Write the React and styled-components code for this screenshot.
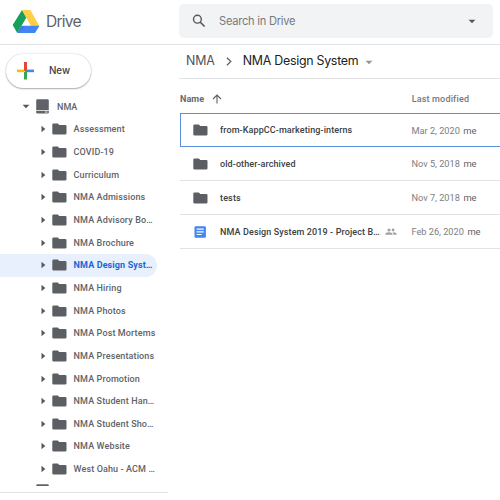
import React from "react";
import styled, { createGlobalStyle } from "styled-components";

const Global = createGlobalStyle`
  * { box-sizing: border-box; }
  body { margin: 0; background: #fff; font-family: Roboto, sans-serif; }
`;

const Page = styled.div`
  width: 500px;
  height: 500px;
  overflow: hidden;
  background: #fff;
  display: flex;
  flex-direction: column;
  color: #5f6368;
`;

const Header = styled.header`
  height: 45px;
  flex: none;
  display: flex;
  border-bottom: 1px solid #e2e3e4;
`;

const Brand = styled.div`
  width: 179px;
  height: 42px;
  padding-left: 12px;
  display: flex;
  align-items: center;
  gap: 6px;
`;

const BrandName = styled.span`
  margin-top: 1px;
  font: 400 15.6px/20px Inter, sans-serif;
  letter-spacing: -0.78px;
  color: #5f6368;
`;

const SearchBar = styled.div`
  width: 313.5px;
  height: 34px;
  margin-top: 4px;
  padding: 0 17px 0 13px;
  border-radius: 5px;
  background: #f1f3f4;
  display: flex;
  align-items: center;
`;

const SearchText = styled.span`
  flex: 1;
  margin-left: 13px;
  font: 400 11.1px/16px Inter, sans-serif;
  letter-spacing: -0.24px;
  color: #77797c;
`;

const Body = styled.div`
  flex: 1;
  min-height: 0;
  display: flex;
`;

const Sidebar = styled.aside`
  width: 168px;
  height: 448px;
  margin-right: 11px;
  flex: none;
  display: flex;
  flex-direction: column;
  border-bottom: 1px solid #e2e3e4;
`;

const NewButton = styled.button`
  width: 85px;
  height: 34px;
  flex: none;
  margin: 9px 0 0 5.5px;
  padding: 0 0 0 11.5px;
  border: 0;
  border-radius: 17px;
  background: #fff;
  box-shadow: 0 1px 1.5px rgba(60, 64, 67, 0.38), 0 0 1.5px rgba(60, 64, 67, 0.3);
  display: flex;
  align-items: center;
  gap: 15px;
  font: 500 9.8px/14px Inter, sans-serif;
  letter-spacing: -0.05px;
  color: #3c4043;
`;

const Tree = styled.div`
  height: 390.5px;
  margin-top: 7.5px;
  overflow: hidden;
`;

const TreeRow = styled.div`
  width: 156.5px;
  height: 22.65px;
  padding-left: ${(p) => (p.$root ? 22 : 40)}px;
  display: flex;
  align-items: center;
  border-radius: 0 12px 12px 0;
  background: ${(p) => (p.$selected ? "#e8f0fe" : "transparent")};
  color: ${(p) => (p.$selected ? "#1967d2" : "#5f6368")};
`;

const TreeLabel = styled.span`
  margin-left: ${(p) => (p.$root ? 8 : 6.6)}px;
  font-size: 9px;
  line-height: 14px;
  font-weight: ${(p) => (p.$selected ? 700 : 500)};
  letter-spacing: ${(p) => p.$track ?? 0.12}px;
  white-space: nowrap;
`;

const RootIcon = styled.span`
  display: flex;
  margin-left: ${(p) => (p.$last ? 14 : 6)}px;
`;

const FolderSlot = styled.span`
  display: flex;
  margin-left: 6px;
`;

const Main = styled.main`
  width: 321px;
  flex: none;
`;

const Breadcrumbs = styled.nav`
  height: 34px;
  padding-left: 7px;
  border-bottom: 1px solid #e2e3e4;
  display: flex;
  align-items: center;
`;

const Crumb = styled.span`
  margin-top: -1px;
  font: 400 12.4px/18px Inter, sans-serif;
  letter-spacing: ${(p) => p.$track}px;
  white-space: nowrap;
  color: ${(p) => (p.$current ? "#202124" : "#505357")};
`;

const CrumbSeparator = styled.span`
  display: flex;
  margin: 0 11px 0 11px;
`;

const CrumbMenu = styled.span`
  display: flex;
  margin: 1px 0 0 7px;
`;

const Columns = styled.div`
  height: 34px;
  padding: 5px 0 0 1px;
  display: flex;
  align-items: center;
  font-size: 9px;
  color: #68696b;
`;

const NameColumn = styled.div`
  width: 231.7px;
  display: flex;
  align-items: center;
  gap: 7.5px;
  font-weight: 700;
  letter-spacing: 0.1px;
`;

const ModifiedColumn = styled.div`
  font-weight: 500;
  letter-spacing: 0.17px;
  color: #777;
`;

const FileRow = styled.div`
  height: 34px;
  margin-left: 1px;
  padding-left: ${(p) => (p.$selected ? 12 : 13)}px;
  border-style: solid;
  border-color: ${(p) => (p.$selected ? "#5b8fe0" : "#e3e3e3")};
  border-width: ${(p) => (p.$selected ? "1px 0 1px 1px" : "0 0 1px 0")};
  display: flex;
  align-items: center;
`;

const FileIcon = styled.div`
  width: 27px;
  display: flex;
  align-items: center;
`;

const FileName = styled.div`
  width: 191.5px;
  display: flex;
  align-items: center;
  justify-content: space-between;
  padding-right: 14.5px;
  white-space: nowrap;
  font-size: 9px;
  font-weight: 500;
  letter-spacing: ${(p) => p.$track}px;
  color: #3c4043;
`;

const Modified = styled.div`
  display: flex;
  gap: 3.5px;
  font-size: 9.2px;
  letter-spacing: 0;
  color: #7c7d7f;
`;

const Owner = styled.span`
  font-size: 9.4px;
  color: #5f6063;
`;

const Logo = () => (
  <svg width="28" height="25" viewBox="0 0 28 25">
    <path d="M10 1 L.7 16 L5.2 24 L14.4 8.5Z" fill="#16a05a" />
    <path d="M10 1H18.4L27.4 17H18.9Z" fill="#ffcf48" />
    <path d="M9.4 16.7H27.5L23 24H5.2Z" fill="#4286f5" />
    <path d="M5.2 24L9.4 16.7L13 19Z" fill="#3268c9" opacity=".3" />
  </svg>
);

const SearchIcon = () => (
  <svg width="14" height="14" viewBox="0 0 14 14" fill="none" stroke="#55585b" strokeWidth="1.4">
    <circle cx="5.4" cy="5.2" r="3.9" />
    <path d="M8.1 8L12.6 12.5" strokeWidth="1.7" />
  </svg>
);

const PlusIcon = () => (
  <svg width="17" height="18" viewBox="0 0 17 18">
    <path d="M0 7.6H7V10.2H0Z" fill="#fbbc04" />
    <path d="M7 0H10V8.9H7Z" fill="#ea4335" />
    <path d="M10 7.6H17V10.2H10Z" fill="#4285f4" />
    <path d="M7 10.2L10 7.6V17.5H7Z" fill="#34a853" />
  </svg>
);

const DownCaret = ({ color }) => (
  <svg width="8" height="5" viewBox="0 0 8 5">
    <path d="M.6 .7H7.4L4 4.3Z" fill={color} />
  </svg>
);

const RightCaret = () => (
  <svg width="6" height="8" viewBox="0 0 6 8">
    <path d="M1.5 .7L5.3 4L1.5 7.3Z" fill="#55585b" />
  </svg>
);

const FolderIcon = () => (
  <svg width="15" height="12" viewBox="0 0 15 12">
    <path d="M1.6 .4H5.8L7.3 1.9H13.2Q14.5 1.9 14.5 3.1V10.3Q14.5 11.6 13.2 11.6H1.6Q.3 11.6 .3 10.3V1.7Q.3 .4 1.6 .4Z" fill="#5b5e62" />
  </svg>
);

const DriveIcon = () => (
  <svg width="13" height="15" viewBox="0 0 13 15">
    <path d="M1.5 .3H11.5Q12.8 .3 12.8 1.6V11H.2V1.6Q.2 .3 1.5 .3Z" fill="#5f6368" />
    <path d="M.2 11.8H12.8V13.2Q12.8 14.6 11.5 14.6H1.5Q.2 14.6 .2 13.2Z" fill="#5f6368" />
    <path d="M9 12.6H11.4V13.5H9Z" fill="#fff" />
  </svg>
);

const DocIcon = () => (
  <svg width="15" height="12" viewBox="0 0 15 12">
    <rect x="1.5" y=".2" width="11.4" height="11.6" rx="1.2" fill="#4285f4" />
    <path d="M3.6 3.2H10.8M3.6 5.9H10.8M3.6 8.5H8.7" stroke="#fff" strokeWidth="1.2" />
  </svg>
);

const PeopleIcon = () => (
  <svg width="12" height="8" viewBox="0 0 12 8" fill="#a0a1a3">
    <circle cx="4" cy="2" r="1.6" />
    <circle cx="8.1" cy="2" r="1.4" />
    <path d="M.4 6.8V5.8Q.4 4.3 4 4.2Q7.4 4.3 7.4 5.8V6.8Z" />
    <path d="M8.2 4.3Q11.6 4.5 11.6 5.8V6.8H8.3V5.8Q8.3 4.9 7.6 4.3Z" />
  </svg>
);

const ChevronIcon = () => (
  <svg width="6" height="9" viewBox="0 0 6 9" fill="none" stroke="#626569" strokeWidth="1.3">
    <path d="M.9 .8L4.8 4.5L.9 8.2" />
  </svg>
);

const ArrowUpIcon = () => (
  <svg width="10" height="10" viewBox="0 0 10 10" fill="none" stroke="#5f6063" strokeWidth="1.1">
    <path d="M5 9.5V1.2M1 5L5 1L9 5" />
  </svg>
);

const folders = [
  "Assessment", "COVID-19", "Curriculum", "NMA Admissions", "NMA Advisory Bo…",
  "NMA Brochure", "NMA Design Syst…", "NMA Hiring", "NMA Photos", "NMA Post Mortems",
  "NMA Presentations", "NMA Promotion", "NMA Student Han…", "NMA Student Sho…",
  "NMA Website", "West Oahu - ACM …",
];

const files = [
  { name: "from-KappCC-marketing-interns", date: "Mar 2, 2020", track: 0.1, selected: true },
  { name: "old-other-archived", date: "Nov 5, 2018", track: 0.09 },
  { name: "tests", date: "Nov 7, 2018", track: 0.15 },
  { name: "NMA Design System 2019 - Project B…", date: "Feb 26, 2020", track: 0.11, doc: true },
];

export default function App() {
  return (
    <Page>
      <Global />
      <Header>
        <Brand>
          <Logo />
          <BrandName>Drive</BrandName>
        </Brand>
        <SearchBar>
          <SearchIcon />
          <SearchText>Search in Drive</SearchText>
          <DownCaret color="#55585b" />
        </SearchBar>
      </Header>
      <Body>
        <Sidebar>
          <NewButton>
            <PlusIcon />
            New
          </NewButton>
          <Tree>
            <TreeRow $root>
              <DownCaret color="#55585b" />
              <RootIcon><DriveIcon /></RootIcon>
              <TreeLabel $root $track={0}>NMA</TreeLabel>
            </TreeRow>
            {folders.map((name) => {
              const selected = name === "NMA Design Syst…";
              return (
                <TreeRow key={name} $selected={selected}>
                  <RightCaret />
                  <FolderSlot><FolderIcon /></FolderSlot>
                  <TreeLabel $selected={selected}>{name}</TreeLabel>
                </TreeRow>
              );
            })}
            <TreeRow $root>
              <RootIcon $last><DriveIcon /></RootIcon>
            </TreeRow>
          </Tree>
        </Sidebar>
        <Main>
          <Breadcrumbs>
            <Crumb $track={-0.1}>NMA</Crumb>
            <CrumbSeparator><ChevronIcon /></CrumbSeparator>
            <Crumb $current $track={-0.27}>NMA Design System</Crumb>
            <CrumbMenu><DownCaret color="#929497" /></CrumbMenu>
          </Breadcrumbs>
          <Columns>
            <NameColumn>Name <ArrowUpIcon /></NameColumn>
            <ModifiedColumn>Last modified</ModifiedColumn>
          </Columns>
          {files.map((f) => (
            <FileRow key={f.name} $selected={f.selected}>
              <FileIcon>{f.doc ? <DocIcon /> : <FolderIcon />}</FileIcon>
              <FileName $track={f.track}>
                {f.name}
                {f.doc && <PeopleIcon />}
              </FileName>
              <Modified>{f.date}<Owner>me</Owner></Modified>
            </FileRow>
          ))}
        </Main>
      </Body>
    </Page>
  );
}
